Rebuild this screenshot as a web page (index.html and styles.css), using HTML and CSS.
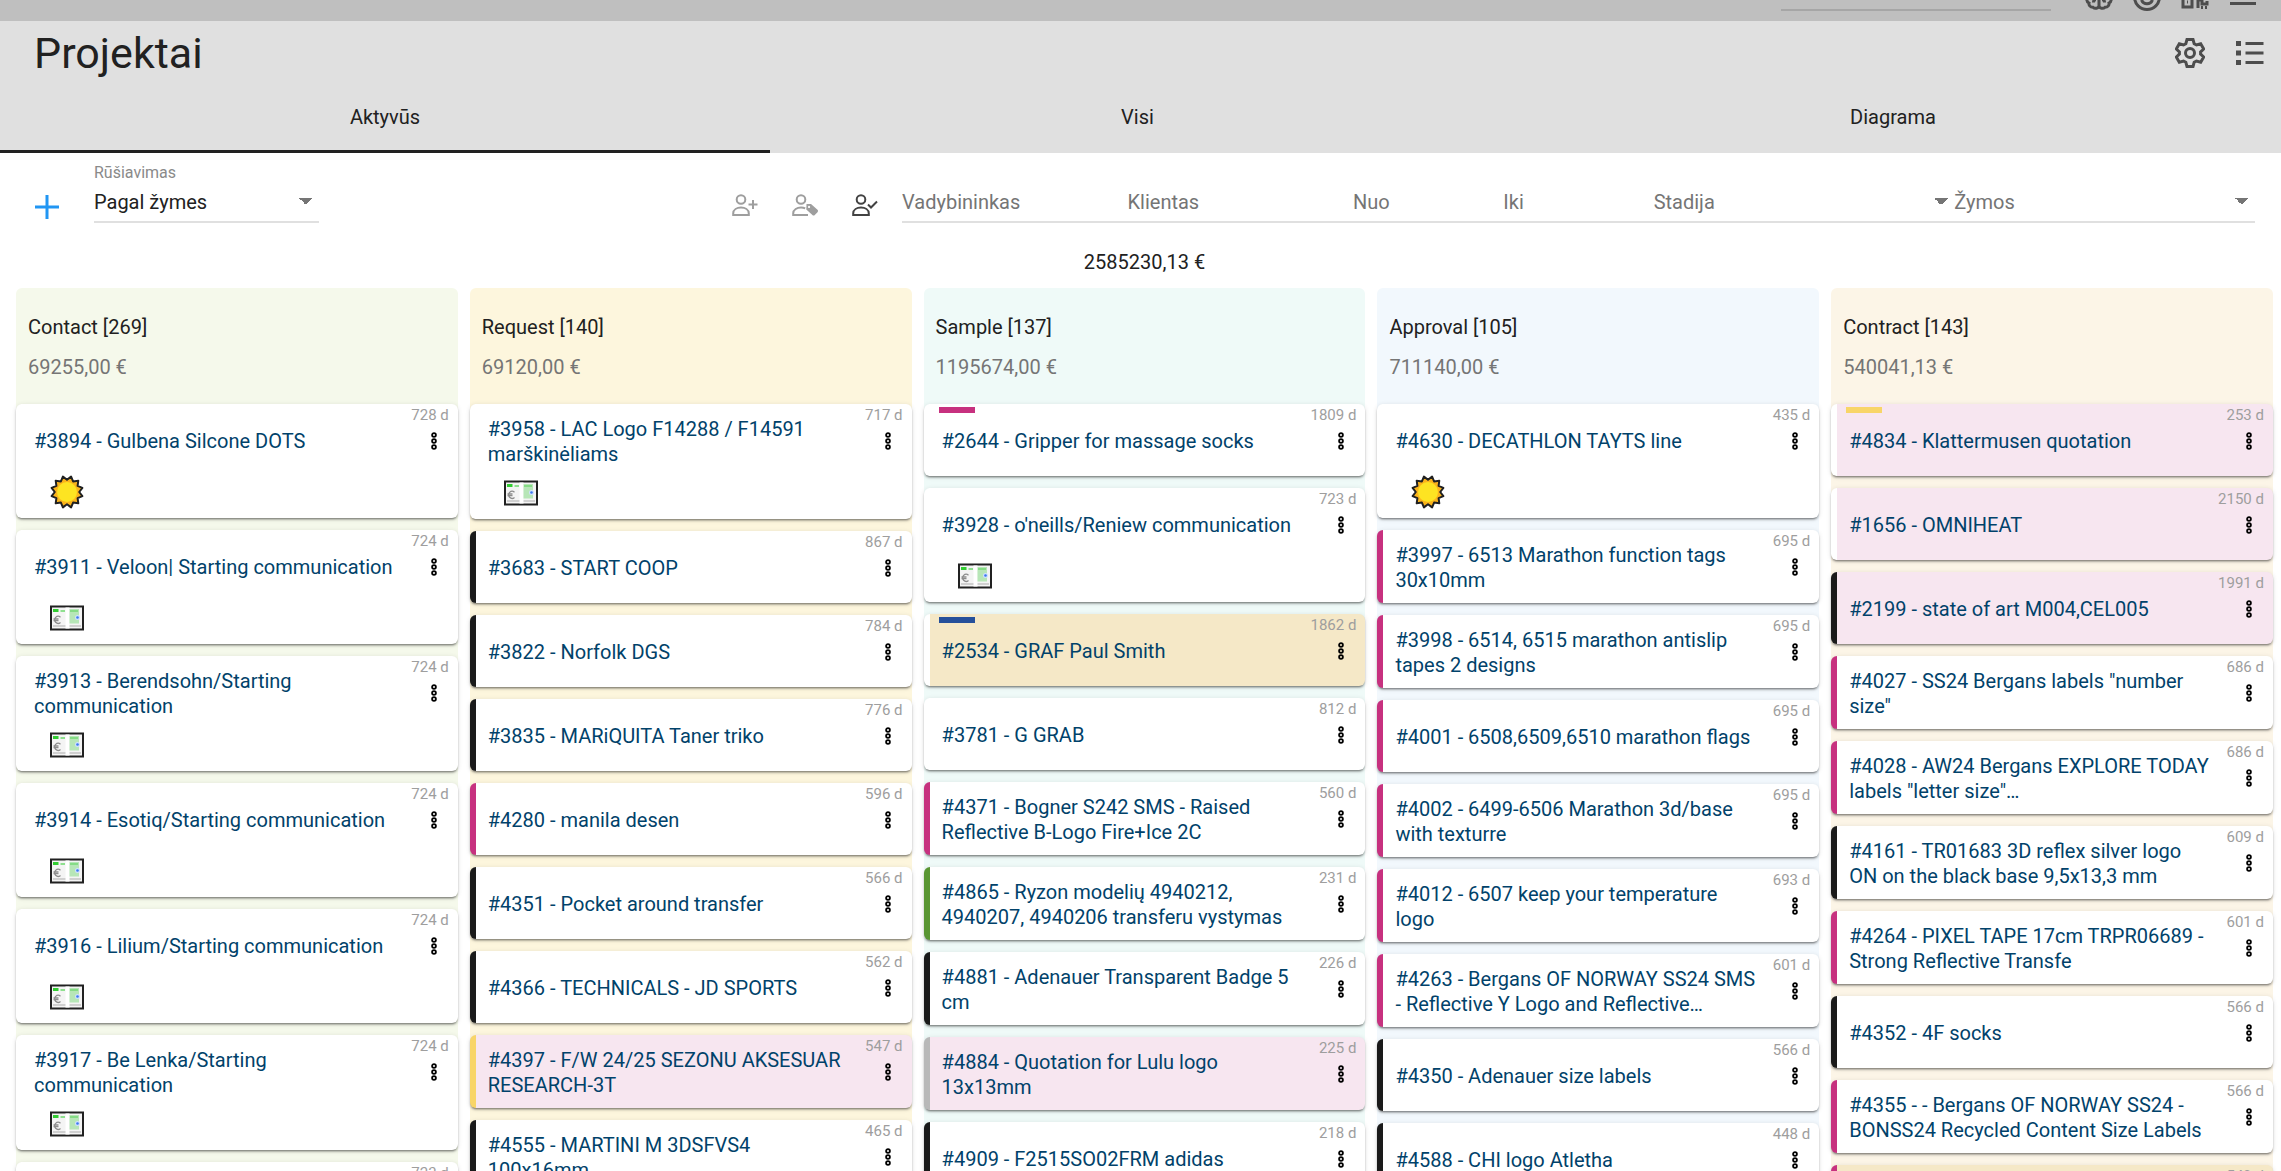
FILE: index.html
```html
<!DOCTYPE html>
<html lang="lt">
	<head>
		<meta charset="utf-8">
		<title>Projektai</title>
		<link rel="stylesheet" href="styles.css">
	</head>
	<body>
		<svg class="sprite" aria-hidden="true">
			<symbol id="dots" viewBox="0 0 24 24">
				<g fill="none" stroke="#000" stroke-width="1.8">
					<circle cx="12" cy="6" r="1.9"/><circle cx="12" cy="12" r="1.9"/><circle cx="12" cy="18" r="1.9"/>
				</g>
			</symbol>
			<symbol id="sun" viewBox="0 0 34 34">
				<path d="M17 4.800 21.100 1.600 23.100 6.400 28.300 5.700 27.600 10.900 32.400 12.900 29.200 17 32.400 21.100 27.600 23.100 28.300 28.300 23.100 27.600 21.100 32.400 17 29.200 12.900 32.400 10.900 27.600 5.700 28.300 6.400 23.100 1.600 21.100 4.800 17 1.600 12.900 6.400 10.900 5.700 5.700 10.900 6.400 12.900 1.600Z" fill="#fbb41c" stroke="#212121" stroke-width="2" stroke-linejoin="round"/>
				<circle cx="17" cy="17" r="10" fill="#fde422"/>
			</symbol>
			<symbol id="money" viewBox="0 0 34 34">
				<path d="M1 5.500h32v23H1z" fill="#f4f4f4" stroke="#212121" stroke-width="2"/>
				<path d="M3 24h28v2H3z" fill="#d0d0d0"/>
				<path d="M15.500 6.500h4v21h-4z" fill="#fff"/>
				<path d="M3 8h5.500v3H3z" fill="#33cc33"/>
				<path d="M10.500 9H15v2h-4.500z" fill="#8fe08f"/>
				<path d="M19.500 8H29v14.500h-9.500z" fill="#b7e6b7"/>
				<path d="M20 9h8v2h-8z" fill="#86dc86"/>
				<circle cx="27.500" cy="16.500" r="2.500" fill="#cfe0ff"/>
				<circle cx="27.500" cy="16.500" r="1.300" fill="#3c78f0"/>
				<path d="M10.500 16.200a3.500 3.500 0 1 0 0 5.200M3.500 18h5M3.500 19.600h5" fill="none" stroke="#8c8c8c" stroke-width="1.300"/>
			</symbol>
		</svg>
		<div class="app">
			<header class="topbar">
				<input class="search" type="search" aria-label="Paieška">
				<button class="icon-btn" aria-label="Asistentas">
					<svg viewBox="0 0 28 28"><path d="M14 4v20M14 23c-1 2.500-4 3-6 1.300-3 0-4.500-2.300-4-4.300-3-1.500-3-6 0-7.500M14 23c1 2.500 4 3 6 1.300 3 0 4.500-2.300 4-4.300 3-1.500 3-6 0-7.500M8.500 19.500c0-2 1-3 2.500-3M19.500 19.500c0-2-1-3-2.500-3"/></svg>
				</button>
				<button class="icon-btn" aria-label="Nuotaika">
					<svg viewBox="0 0 28 28"><circle cx="14" cy="14" r="12.500"/><path d="M8.500 17c2 5 9 5 11 0"/></svg>
				</button>
				<button class="icon-btn" aria-label="QR kodas">
					<svg viewBox="0 0 28 28"><path d="M2 15h9v9H2zM6 19h1M17 25v-8h4v4h5v-3"/><path d="M20 24.500h2M24 24.500h2"/></svg>
				</button>
				<button class="icon-btn" aria-label="Meniu">
					<svg viewBox="0 0 28 28"><path d="M1 5h26M1 12.500h26M1 20.500h26"/></svg>
				</button>
			</header>
			<div class="page-head">
				<div class="title-row">
					<h1>Projektai</h1>
					<button class="icon-btn" aria-label="Nustatymai">
						<svg viewBox="0 0 30 30"><path d="M12 1.500h6l1.200 4.200 2.300 1.300 4.200-1.200 3 5.200-3.100 3v2l3.100 3-3 5.200-4.200-1.200-2.300 1.300L18 28.500h-6l-1.200-4.200L8.500 23l-4.200 1.200-3-5.200 3.100-3v-2l-3.100-3 3-5.200L8.500 7l2.300-1.300z"/><circle cx="15" cy="15" r="4.500"/></svg>
					</button>
					<button class="icon-btn" aria-label="Sąrašas">
						<svg viewBox="0 0 30 30"><path d="M10.500 5.500h18M10.500 15h18M10.500 24.500h18"/><path class="fill" d="M1 3h5v5H1zM1 12.500h5v5H1zM1 22h5v5H1z"/></svg>
					</button>
				</div>
				<nav class="tabs">
					<a class="tab active" href="#">Aktyvūs</a>
					<a class="tab" href="#">Visi</a>
					<a class="tab" href="#">Diagrama</a>
				</nav>
			</div>
			<div class="toolbar">
				<button class="add" aria-label="Pridėti">
					<svg viewBox="0 0 26 26"><path d="M13 1v24M1 13h24"/></svg>
				</button>
				<div class="sort">
					<label for="sort">Rūšiavimas</label>
					<select id="sort" class="field">
						<option>Pagal žymes</option>
					</select>
				</div>
				<div class="user-btns">
					<button class="icon-btn" aria-label="Pridėti vadybininką">
						<svg viewBox="0 0 26 26"><circle cx="9" cy="7.500" r="4.300"/><path d="M1.200 23v-1.500c0-8 15.600-8 15.600 0V23zM21 8v9M16.500 12.500h9"/></svg>
					</button>
					<button class="icon-btn" aria-label="Vadybininko žyma">
						<svg viewBox="0 0 26 26"><circle cx="9" cy="7.500" r="4.300"/><path d="M16 23H1.200v-1.500c0-4 4-6 7.800-6 1.500 0 3 .3 4.200.900"/><path class="fill" fill-rule="evenodd" d="M14.500 12H19l6.500 5.800q1 1.200 0 2.400l-2.700 2.900q-1.200 1-2.400 0L14.300 17.500zM17 13.800a1.100 1.100 0 1 0 .1 0z"/></svg>
					</button>
					<button class="icon-btn dark" aria-label="Mano projektai">
						<svg viewBox="0 0 26 26"><circle cx="9" cy="7.500" r="4.300"/><path d="M1.200 23v-1.500c0-8 15.600-8 15.600 0V23zM16 12.500l3 3 6-6"/></svg>
					</button>
				</div>
				<div class="filters">
					<input class="field" type="text" placeholder="Vadybininkas" aria-label="Vadybininkas">
					<input class="field" type="text" placeholder="Klientas" aria-label="Klientas">
					<input class="field" type="text" placeholder="Nuo" aria-label="Nuo">
					<input class="field" type="text" placeholder="Iki" aria-label="Iki">
					<select class="field empty" aria-label="Stadija"><option>Stadija</option></select>
					<select class="field empty" aria-label="Žymos"><option>Žymos</option></select>
				</div>
			</div>
			<main class="board">
				<p class="total">2585230,13 €</p>
				<div class="columns">
					<section class="column contact">
						<div class="column-head">
							<h2>Contact [269]</h2>
							<p>69255,00 €</p>
						</div>
						<article class="card">
							<span class="age">728 d</span>
							<div class="card-main"><a href="#">#3894 - Gulbena Silcone DOTS</a><button aria-label="Veiksmai"><svg><use href="#dots"/></svg></button></div>
							<div class="marks"><svg><use href="#sun"/></svg></div>
						</article>
						<article class="card">
							<span class="age">724 d</span>
							<div class="card-main"><a href="#">#3911 - Veloon| Starting communication</a><button aria-label="Veiksmai"><svg><use href="#dots"/></svg></button></div>
							<div class="marks"><svg><use href="#money"/></svg></div>
						</article>
						<article class="card">
							<span class="age">724 d</span>
							<div class="card-main"><a href="#">#3913 - Berendsohn/Starting communication</a><button aria-label="Veiksmai"><svg><use href="#dots"/></svg></button></div>
							<div class="marks"><svg><use href="#money"/></svg></div>
						</article>
						<article class="card">
							<span class="age">724 d</span>
							<div class="card-main"><a href="#">#3914 - Esotiq/Starting communication</a><button aria-label="Veiksmai"><svg><use href="#dots"/></svg></button></div>
							<div class="marks"><svg><use href="#money"/></svg></div>
						</article>
						<article class="card">
							<span class="age">724 d</span>
							<div class="card-main"><a href="#">#3916 - Lilium/Starting communication</a><button aria-label="Veiksmai"><svg><use href="#dots"/></svg></button></div>
							<div class="marks"><svg><use href="#money"/></svg></div>
						</article>
						<article class="card">
							<span class="age">724 d</span>
							<div class="card-main"><a href="#">#3917 - Be Lenka/Starting communication</a><button aria-label="Veiksmai"><svg><use href="#dots"/></svg></button></div>
							<div class="marks"><svg><use href="#money"/></svg></div>
						</article>
						<article class="card">
							<span class="age">723 d</span>
							<div class="card-main"></div>
						</article>
					</section>
					<section class="column request">
						<div class="column-head">
							<h2>Request [140]</h2>
							<p>69120,00 €</p>
						</div>
						<article class="card">
							<span class="age">717 d</span>
							<div class="card-main"><a href="#">#3958 - LAC Logo F14288 / F14591 marškinėliams</a><button aria-label="Veiksmai"><svg><use href="#dots"/></svg></button></div>
							<div class="marks"><svg><use href="#money"/></svg></div>
						</article>
						<article class="card black">
							<span class="age">867 d</span>
							<div class="card-main"><a href="#">#3683 - START COOP</a><button aria-label="Veiksmai"><svg><use href="#dots"/></svg></button></div>
						</article>
						<article class="card black">
							<span class="age">784 d</span>
							<div class="card-main"><a href="#">#3822 - Norfolk DGS</a><button aria-label="Veiksmai"><svg><use href="#dots"/></svg></button></div>
						</article>
						<article class="card black">
							<span class="age">776 d</span>
							<div class="card-main"><a href="#">#3835 - MARiQUITA Taner triko</a><button aria-label="Veiksmai"><svg><use href="#dots"/></svg></button></div>
						</article>
						<article class="card magenta">
							<span class="age">596 d</span>
							<div class="card-main"><a href="#">#4280 - manila desen</a><button aria-label="Veiksmai"><svg><use href="#dots"/></svg></button></div>
						</article>
						<article class="card black">
							<span class="age">566 d</span>
							<div class="card-main"><a href="#">#4351 - Pocket around transfer</a><button aria-label="Veiksmai"><svg><use href="#dots"/></svg></button></div>
						</article>
						<article class="card black">
							<span class="age">562 d</span>
							<div class="card-main"><a href="#">#4366 - TECHNICALS - JD SPORTS</a><button aria-label="Veiksmai"><svg><use href="#dots"/></svg></button></div>
						</article>
						<article class="card yellow pink-bg">
							<span class="age">547 d</span>
							<div class="card-main"><a href="#">#4397 - F/W 24/25 SEZONU AKSESUAR RESEARCH-3T</a><button aria-label="Veiksmai"><svg><use href="#dots"/></svg></button></div>
						</article>
						<article class="card black">
							<span class="age">465 d</span>
							<div class="card-main"><a href="#">#4555 - MARTINI M 3DSFVS4 100x16mm</a><button aria-label="Veiksmai"><svg><use href="#dots"/></svg></button></div>
						</article>
					</section>
					<section class="column sample">
						<div class="column-head">
							<h2>Sample [137]</h2>
							<p>1195674,00 €</p>
						</div>
						<article class="card">
							<span class="flag flag-magenta"></span>
							<span class="age">1809 d</span>
							<div class="card-main"><a href="#">#2644 - Gripper for massage socks</a><button aria-label="Veiksmai"><svg><use href="#dots"/></svg></button></div>
						</article>
						<article class="card">
							<span class="age">723 d</span>
							<div class="card-main"><a href="#">#3928 - o'neills/Reniew communication</a><button aria-label="Veiksmai"><svg><use href="#dots"/></svg></button></div>
							<div class="marks"><svg><use href="#money"/></svg></div>
						</article>
						<article class="card tan-bg">
							<span class="flag flag-blue"></span>
							<span class="age">1862 d</span>
							<div class="card-main"><a href="#">#2534 - GRAF Paul Smith</a><button aria-label="Veiksmai"><svg><use href="#dots"/></svg></button></div>
						</article>
						<article class="card">
							<span class="age">812 d</span>
							<div class="card-main"><a href="#">#3781 - G GRAB</a><button aria-label="Veiksmai"><svg><use href="#dots"/></svg></button></div>
						</article>
						<article class="card magenta">
							<span class="age">560 d</span>
							<div class="card-main"><a href="#">#4371 - Bogner S242 SMS - Raised Reflective B-Logo Fire+Ice 2C</a><button aria-label="Veiksmai"><svg><use href="#dots"/></svg></button></div>
						</article>
						<article class="card green">
							<span class="age">231 d</span>
							<div class="card-main"><a href="#">#4865 - Ryzon modelių 4940212, 4940207, 4940206 transferu vystymas</a><button aria-label="Veiksmai"><svg><use href="#dots"/></svg></button></div>
						</article>
						<article class="card black">
							<span class="age">226 d</span>
							<div class="card-main"><a href="#">#4881 - Adenauer Transparent Badge 5 cm</a><button aria-label="Veiksmai"><svg><use href="#dots"/></svg></button></div>
						</article>
						<article class="card grey pink-bg">
							<span class="age">225 d</span>
							<div class="card-main"><a href="#">#4884 - Quotation for Lulu logo 13x13mm</a><button aria-label="Veiksmai"><svg><use href="#dots"/></svg></button></div>
						</article>
						<article class="card black">
							<span class="age">218 d</span>
							<div class="card-main"><a href="#">#4909 - F2515SO02FRM adidas</a><button aria-label="Veiksmai"><svg><use href="#dots"/></svg></button></div>
						</article>
					</section>
					<section class="column approval">
						<div class="column-head">
							<h2>Approval [105]</h2>
							<p>711140,00 €</p>
						</div>
						<article class="card">
							<span class="age">435 d</span>
							<div class="card-main"><a href="#">#4630 - DECATHLON TAYTS line</a><button aria-label="Veiksmai"><svg><use href="#dots"/></svg></button></div>
							<div class="marks"><svg><use href="#sun"/></svg></div>
						</article>
						<article class="card magenta">
							<span class="age">695 d</span>
							<div class="card-main"><a href="#">#3997 - 6513 Marathon function tags 30x10mm</a><button aria-label="Veiksmai"><svg><use href="#dots"/></svg></button></div>
						</article>
						<article class="card magenta">
							<span class="age">695 d</span>
							<div class="card-main"><a href="#">#3998 - 6514, 6515 marathon antislip tapes 2 designs</a><button aria-label="Veiksmai"><svg><use href="#dots"/></svg></button></div>
						</article>
						<article class="card magenta">
							<span class="age">695 d</span>
							<div class="card-main"><a href="#">#4001 - 6508,6509,6510 marathon flags</a><button aria-label="Veiksmai"><svg><use href="#dots"/></svg></button></div>
						</article>
						<article class="card magenta">
							<span class="age">695 d</span>
							<div class="card-main"><a href="#">#4002 - 6499-6506 Marathon 3d/base with texturre</a><button aria-label="Veiksmai"><svg><use href="#dots"/></svg></button></div>
						</article>
						<article class="card magenta">
							<span class="age">693 d</span>
							<div class="card-main"><a href="#">#4012 - 6507 keep your temperature logo</a><button aria-label="Veiksmai"><svg><use href="#dots"/></svg></button></div>
						</article>
						<article class="card magenta">
							<span class="age">601 d</span>
							<div class="card-main"><a href="#">#4263 - Bergans OF NORWAY SS24 SMS - Reflective Y Logo and Reflective…</a><button aria-label="Veiksmai"><svg><use href="#dots"/></svg></button></div>
						</article>
						<article class="card black">
							<span class="age">566 d</span>
							<div class="card-main"><a href="#">#4350 - Adenauer size labels</a><button aria-label="Veiksmai"><svg><use href="#dots"/></svg></button></div>
						</article>
						<article class="card black">
							<span class="age">448 d</span>
							<div class="card-main"><a href="#">#4588 - CHI logo Atletha</a><button aria-label="Veiksmai"><svg><use href="#dots"/></svg></button></div>
						</article>
					</section>
					<section class="column contract">
						<div class="column-head">
							<h2>Contract [143]</h2>
							<p>540041,13 €</p>
						</div>
						<article class="card pink-bg">
							<span class="flag flag-yellow"></span>
							<span class="age">253 d</span>
							<div class="card-main"><a href="#">#4834 - Klattermusen quotation</a><button aria-label="Veiksmai"><svg><use href="#dots"/></svg></button></div>
						</article>
						<article class="card pink-bg">
							<span class="age">2150 d</span>
							<div class="card-main"><a href="#">#1656 - OMNIHEAT</a><button aria-label="Veiksmai"><svg><use href="#dots"/></svg></button></div>
						</article>
						<article class="card black pink-bg">
							<span class="age">1991 d</span>
							<div class="card-main"><a href="#">#2199 - state of art M004,CEL005</a><button aria-label="Veiksmai"><svg><use href="#dots"/></svg></button></div>
						</article>
						<article class="card magenta">
							<span class="age">686 d</span>
							<div class="card-main"><a href="#">#4027 - SS24 Bergans labels "number size"</a><button aria-label="Veiksmai"><svg><use href="#dots"/></svg></button></div>
						</article>
						<article class="card magenta">
							<span class="age">686 d</span>
							<div class="card-main"><a href="#">#4028 - AW24 Bergans EXPLORE TODAY labels "letter size"…</a><button aria-label="Veiksmai"><svg><use href="#dots"/></svg></button></div>
						</article>
						<article class="card black">
							<span class="age">609 d</span>
							<div class="card-main"><a href="#">#4161 - TR01683 3D reflex silver logo ON on the black base 9,5x13,3 mm</a><button aria-label="Veiksmai"><svg><use href="#dots"/></svg></button></div>
						</article>
						<article class="card magenta">
							<span class="age">601 d</span>
							<div class="card-main"><a href="#">#4264 - PIXEL TAPE 17cm TRPR06689 - Strong Reflective Transfe</a><button aria-label="Veiksmai"><svg><use href="#dots"/></svg></button></div>
						</article>
						<article class="card black">
							<span class="age">566 d</span>
							<div class="card-main"><a href="#">#4352 - 4F socks</a><button aria-label="Veiksmai"><svg><use href="#dots"/></svg></button></div>
						</article>
						<article class="card magenta">
							<span class="age">566 d</span>
							<div class="card-main"><a href="#">#4355 - - Bergans OF NORWAY SS24 - BONSS24 Recycled Content Size Labels</a><button aria-label="Veiksmai"><svg><use href="#dots"/></svg></button></div>
						</article>
						<article class="card magenta tan-bg">
							<span class="age">549 d</span>
							<div class="card-main"></div>
						</article>
					</section>
				</div>
			</main>
		</div>
	</body>
</html>
```
FILE: styles.css
```css
* {
	box-sizing: border-box;
	margin: 0;
	padding: 0;
}
body {
	font-family: Roboto, sans-serif;
	font-size: 20px;
	line-height: 25px;
	color: #212121;
	background-color: #fff;
}
a {
	color: inherit;
	text-decoration: none;
}
button, input, select {
	font: inherit;
	color: inherit;
	border: 0;
	background: none;
	border-radius: 0;
}
button {
	cursor: pointer;
}
svg {
	display: block;
	fill: none;
	stroke: currentColor;
	stroke-width: 2;
}
.fill {
	fill: currentColor;
	stroke: none;
}
.sprite {
	position: absolute;
	width: 0;
	height: 0;
}
.app {
	display: flex;
	flex-direction: column;
	height: 100vh;
	overflow: hidden;
}

/* header */
.topbar {
	display: flex;
	flex: none;
	justify-content: flex-end;
	align-items: flex-end;
	gap: 20px;
	height: 21px;
	padding: 0 24px 10px 0;
	overflow: hidden;
	background-color: #bfbfbf;
	color: #4d4d4d;
}
.topbar svg {
	width: 28px;
	height: 28px;
	stroke-width: 3;
}
.search {
	width: 270px;
	height: 30px;
	margin-right: 14px;
	border-bottom: 2px solid #a6a6a6;
}
.page-head {
	flex: none;
	background-color: #e0e0e0;
}
.title-row {
	display: flex;
	align-items: center;
	gap: 30px;
	height: 60px;
	padding: 4px 16px 0 34px;
}
h1 {
	flex: 1;
	font-size: 43px;
	font-weight: 400;
	line-height: 50px;
}
.title-row .icon-btn {
	color: #4d4d4d;
}
.title-row svg {
	width: 30px;
	height: 30px;
	stroke-width: 3;
}
.tabs {
	display: grid;
	grid-template-columns: 770fr 735fr 776fr;
}
.tab {
	height: 72px;
	line-height: 72px;
	text-align: center;
}
.tab.active {
	border-bottom: 3px solid #212121;
}

/* toolbar */
.toolbar {
	display: flex;
	flex: none;
	align-items: flex-end;
	height: 70px;
	padding-right: 26px;
}
.add {
	margin: 0 34px 3px;
	color: #2196f3;
}
.add svg {
	width: 26px;
	height: 26px;
	stroke-width: 3;
}
.sort {
	width: 225px;
}
.sort label {
	display: block;
	font-size: 16px;
	line-height: 20px;
	color: #8a8a8a;
}
.field {
	width: 100%;
	height: 40px;
	min-width: 0;
	border-bottom: 2px solid #e0e0e0;
}
.field::placeholder {
	color: #757575;
	opacity: 1;
}
select.field {
	appearance: none;
	background: linear-gradient(to bottom right, #757575 50%, transparent 50%) no-repeat right 6px top 15px / 7px 7px,
		linear-gradient(to bottom left, #757575 50%, transparent 50%) no-repeat right 13px top 15px / 7px 7px;
}
.field.empty {
	color: #757575;
}
.user-btns {
	display: flex;
	gap: 34px;
	margin: 0 24px 5px auto;
	color: #9e9e9e;
}
.user-btns svg {
	width: 26px;
	height: 26px;
}
.user-btns .dark {
	color: #424242;
}
.filters {
	display: grid;
	flex: 0 0 60%;
	grid-template-columns: 3fr 3fr 2fr 2fr 4fr 4fr;
}

/* board */
.board {
	display: flex;
	flex: 1;
	flex-direction: column;
	min-height: 0;
	padding: 27px 8px 0 16px;
}
.total {
	padding-bottom: 13px;
	text-align: center;
}
.columns {
	display: grid;
	flex: 1;
	grid-template-columns: repeat(5, minmax(0, 1fr));
	gap: 12px;
	min-height: 0;
}
.column {
	border-radius: 6px 6px 0 0;
}
.contact {
	background-color: #f5f9eb;
}
.request {
	background-color: #fdf6dd;
}
.sample {
	background-color: #effaf8;
}
.approval {
	background-color: #f2f8fd;
}
.contract {
	background-color: #fcf5e7;
}
.column-head {
	height: 116px;
	padding: 27px 12px 0;
}
.column-head h2 {
	font-size: 20px;
	font-weight: 400;
	line-height: 25px;
	margin-bottom: 15px;
}
.column-head p {
	color: #757575;
}
.card {
	position: relative;
	margin-bottom: 12px;
	border-left: 6px solid #fff;
	border-radius: 6px;
	background-color: #fff;
	box-shadow: 0 3px 1px -2px rgba(0, 0, 0, .2), 0 2px 2px rgba(0, 0, 0, .24), 0 1px 5px rgba(0, 0, 0, .12);
}
.card-main {
	display: flex;
	align-items: center;
	gap: 21px;
	min-height: 72px;
	padding: 13px 8px 10px 12px;
	color: #01426a;
}
.card-main a {
	flex: 1;
}
.card-main button {
	flex: none;
	padding: 3px 4px 5px;
}
.card-main svg {
	width: 24px;
	height: 24px;
}
.age {
	position: absolute;
	top: 2px;
	right: 9px;
	font-size: 15px;
	line-height: 18px;
	color: #9e9e9e;
}
.flag {
	position: absolute;
	top: 3px;
	left: 9px;
	width: 36px;
	height: 6px;
}
.marks {
	height: 43px;
	margin-top: -1px;
	padding-left: 28px;
}
.marks svg {
	width: 34px;
	height: 34px;
	stroke: none;
}
.black {
	border-left-color: #1a1a1a;
}
.magenta {
	border-left-color: #c7317f;
}
.yellow {
	border-left-color: #f8d568;
}
.green {
	border-left-color: #5a9632;
}
.grey {
	border-left-color: #b8b8b8;
}
.pink-bg {
	background-color: #f7e6f0;
}
.tan-bg {
	background-color: #f5e8c7;
}
.flag-magenta {
	background-color: #c7317f;
}
.flag-blue {
	background-color: #25509b;
}
.flag-yellow {
	background-color: #f8d568;
}
```
